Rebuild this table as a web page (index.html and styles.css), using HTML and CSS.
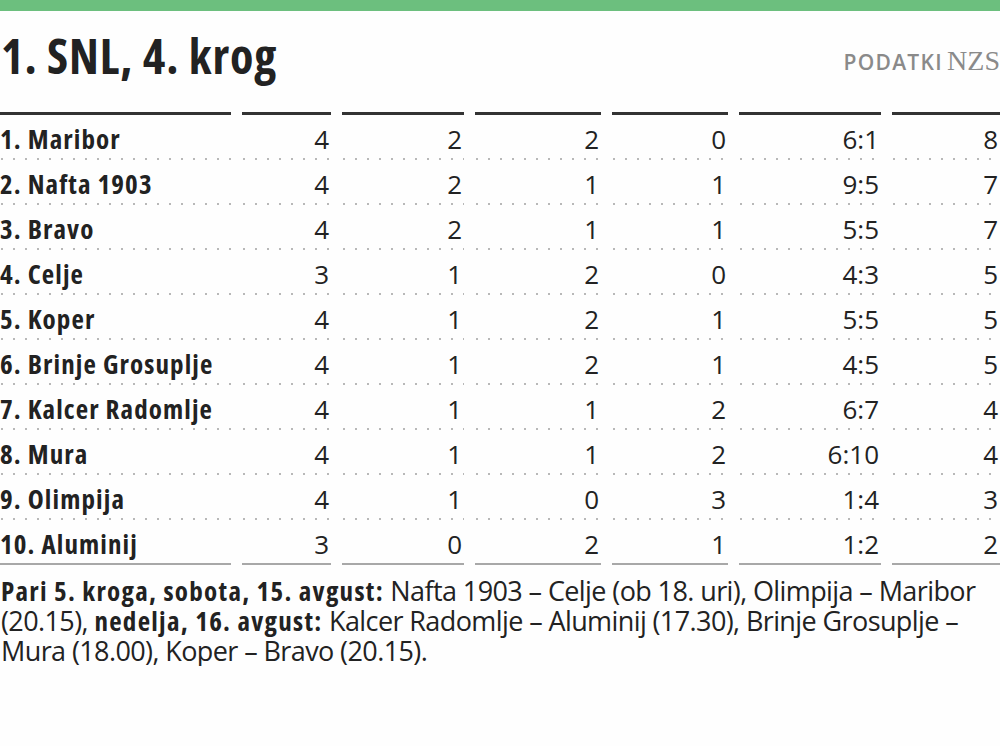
FILE: index.html
```html
<!DOCTYPE html>
<html lang="sl">
<head>
<meta charset="utf-8">
<title>1. SNL, 4. krog</title>
<link rel="stylesheet" href="styles.css">
</head>
<body>
<div class="topbar"></div>
<header class="head">
  <h1 class="title">1. SNL, 4. krog</h1>
  <div class="source"><span class="src-label">PODATKI</span> <span class="src-name">NZS</span></div>
</header>
<div class="table">
  <div class="cell hd"></div><div class="cell hd"></div><div class="cell hd"></div><div class="cell hd"></div><div class="cell hd"></div><div class="cell hd"></div><div class="cell hd"></div>

  <div class="cell name">1. Maribor</div><div class="cell">4</div><div class="cell">2</div><div class="cell">2</div><div class="cell">0</div><div class="cell">6:1</div><div class="cell">8</div>
  <div class="cell name">2. Nafta 1903</div><div class="cell">4</div><div class="cell">2</div><div class="cell">1</div><div class="cell">1</div><div class="cell">9:5</div><div class="cell">7</div>
  <div class="cell name">3. Bravo</div><div class="cell">4</div><div class="cell">2</div><div class="cell">1</div><div class="cell">1</div><div class="cell">5:5</div><div class="cell">7</div>
  <div class="cell name">4. Celje</div><div class="cell">3</div><div class="cell">1</div><div class="cell">2</div><div class="cell">0</div><div class="cell">4:3</div><div class="cell">5</div>
  <div class="cell name">5. Koper</div><div class="cell">4</div><div class="cell">1</div><div class="cell">2</div><div class="cell">1</div><div class="cell">5:5</div><div class="cell">5</div>
  <div class="cell name">6. Brinje Grosuplje</div><div class="cell">4</div><div class="cell">1</div><div class="cell">2</div><div class="cell">1</div><div class="cell">4:5</div><div class="cell">5</div>
  <div class="cell name">7. Kalcer Radomlje</div><div class="cell">4</div><div class="cell">1</div><div class="cell">1</div><div class="cell">2</div><div class="cell">6:7</div><div class="cell">4</div>
  <div class="cell name">8. Mura</div><div class="cell">4</div><div class="cell">1</div><div class="cell">1</div><div class="cell">2</div><div class="cell">6:10</div><div class="cell">4</div>
  <div class="cell name">9. Olimpija</div><div class="cell">4</div><div class="cell">1</div><div class="cell">0</div><div class="cell">3</div><div class="cell">1:4</div><div class="cell">3</div>
  <div class="cell name last">10. Aluminij</div><div class="cell last">3</div><div class="cell last">0</div><div class="cell last">2</div><div class="cell last">1</div><div class="cell last">1:2</div><div class="cell last">2</div>
</div>
<p class="note"><b>Pari 5. kroga, sobota, 15. avgust:</b> Nafta 1903 – Celje (ob 18. uri), Olimpija – Maribor (20.15), <b>nedelja, 16. avgust:</b> Kalcer Radomlje – Aluminij (17.30), Brinje Grosuplje – Mura (18.00), Koper – Bravo (20.15).</p>
</body>
</html>
```

FILE: styles.css
```css
html, body {
  margin: 0;
  padding: 0;
  background: #fefefe;
}
body {
  color: #222;
  font-family: "Open Sans", "Noto Sans", sans-serif;
}
.topbar {
  height: 11px;
  background: #6cbf7e;
}
.head {
  display: flex;
  justify-content: space-between;
  align-items: flex-start;
  height: 101px;
  box-sizing: border-box;
  padding-top: 18px;
}
.title {
  margin: 0 0 0 1px;
  font-size: 48px;
  font-weight: 700;
  line-height: 54px;
  letter-spacing: 0.9px;
  font-stretch: 75%;
}
.source {
  margin-top: 17px;
  color: #8a8a8a;
  white-space: nowrap;
  font-size: 16px;
  line-height: 30px;
}
.src-label {
  font-size: 21px;
  font-weight: 600;
  letter-spacing: 1.3px;
}
.src-name {
  font-family: "Liberation Serif", serif;
  font-size: 28px;
}
.table {
  display: grid;
  grid-template-columns: 231px 89px 122px 126px 116px 142px 1fr;
  column-gap: 11px;
}
.cell {
  height: 45px;
  line-height: 48px;
  font-size: 26px;
  text-align: right;
  padding-right: 2px;
  background-image: linear-gradient(to right, #b8b8b8 2px, transparent 2px);
  background-size: 12px 2px;
  background-repeat: repeat-x;
  background-position: 1px 100%;
}
.cell.name {
  text-align: left;
  font-size: 27px;
  font-weight: 700;
  font-stretch: 75%;
  letter-spacing: 1.1px;
  padding-right: 0;
}
.cell.hd {
  height: 3px;
  background: #333;
}
.cell.last {
  background: none;
  border-bottom: 2px solid #a8a8a8;
  height: 43px;
}
.note {
  margin: 11px 0 0 1px;
  font-size: 27px;
  line-height: 30px;
  letter-spacing: -0.6px;
}
.note b {
  font-weight: 700;
  font-stretch: 75%;
  letter-spacing: 1.3px;
}
```
